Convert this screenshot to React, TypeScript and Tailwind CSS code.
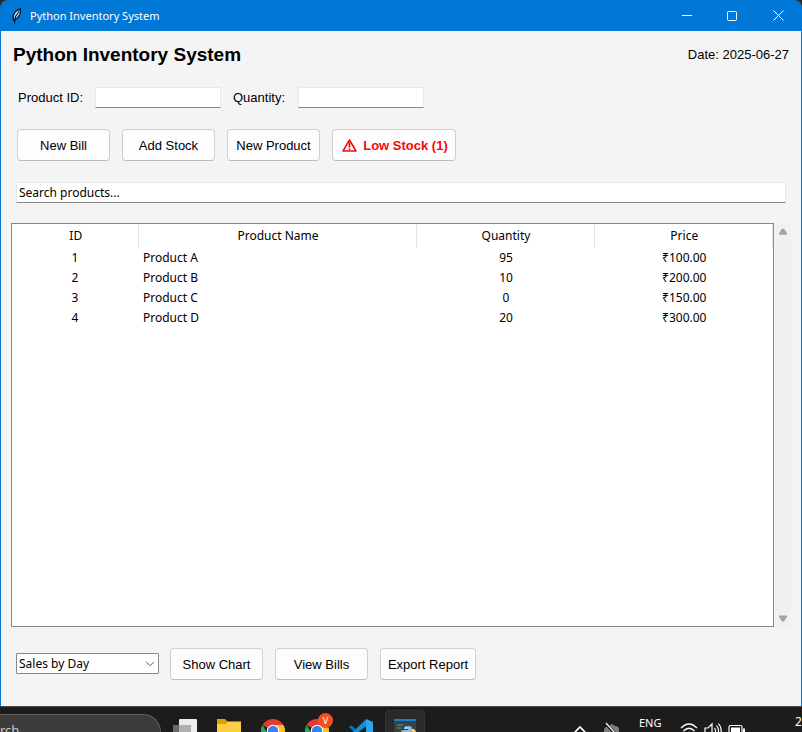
import type { ReactNode } from "react";

const products = [
  { id: 1, name: "Product A", quantity: 95, price: "₹100.00" },
  { id: 2, name: "Product B", quantity: 10, price: "₹200.00" },
  { id: 3, name: "Product C", quantity: 0, price: "₹150.00" },
  { id: 4, name: "Product D", quantity: 20, price: "₹300.00" },
];

const uiFont = "font-['Noto_Sans','Open_Sans',sans-serif]";
const fieldStyle =
  "h-[21px] border border-[#e8e8e8] border-b-[#868686] bg-white outline-none";

function TkButton({ children, className = "w-[93px]" }: { children: ReactNode; className?: string }) {
  return (
    <button
      type="button"
      className={`flex h-8 shrink-0 items-center justify-center rounded-[4px] border border-[#d0d0d0] border-b-[#bcbcbc] bg-[#fdfdfd] pt-px whitespace-nowrap ${className}`}
    >
      {children}
    </button>
  );
}

function TitleBar() {
  return (
    <div className="bg-[#23292e]">
      <header className="flex h-[31px] items-center rounded-t-[8px] bg-[#0078d7] pl-[11px] text-white">
        <svg width="11" height="16" viewBox="0 0 11 16" aria-hidden="true">
          <path d="M9.500.8C6 1.600 3 4.500 2.200 8L2.500 12 6 10.500C8.500 8.500 9.800 4.500 9.500.8Z" fill="#9cc6ea" stroke="#0b1a2a" strokeWidth="1.300" />
          <path d="M8.300 2.500 4.600 8.500 3.500 15.500" fill="none" stroke="#0b1a2a" strokeWidth="1.200" />
          <path d="M4 7.500 7 3.500" stroke="#e8f4ff" strokeWidth=".8" />
        </svg>
        <span className={`flex-1 pl-2 text-[11px] leading-4 ${uiFont}`}>Python Inventory System</span>
        <button type="button" aria-label="Minimize" className="flex h-full w-[45px] items-center justify-center">
          <svg width="10" height="10" viewBox="0 0 10 10"><path d="M0 4.500h10" stroke="white" /></svg>
        </button>
        <button type="button" aria-label="Maximize" className="flex h-full w-[46px] items-center justify-center">
          <svg width="10" height="10" viewBox="0 0 10 10"><rect x=".5" y=".5" width="9" height="9" rx=".8" fill="none" stroke="white" /></svg>
        </button>
        <button type="button" aria-label="Close" className="flex h-full w-[47px] items-center justify-center">
          <svg width="11" height="11" viewBox="0 0 11 11"><path d="m.5.5 10 10M10.500.5l-10 10" stroke="white" /></svg>
        </button>
      </header>
    </div>
  );
}

function ProductTable() {
  return (
    <div className="min-w-0 flex-1 border border-[#828790] bg-white">
      <table className={`w-full table-fixed border-collapse text-center text-[12px] ${uiFont}`}>
        <colgroup>
          <col className="w-[126px]" />
          <col className="w-[278px]" />
          <col className="w-[178px]" />
          <col />
        </colgroup>
        <thead>
          <tr className="h-6">
            {["ID", "Product Name", "Quantity", "Price"].map((label) => (
              <th key={label} scope="col" className="border-r border-[#e5e5e5] p-0 pl-[2px] leading-4 font-normal">
                {label}
              </th>
            ))}
          </tr>
        </thead>
        <tbody>
          {products.map((product) => (
            <tr key={product.id} className="h-5">
              <td className="p-0 leading-4">{product.id}</td>
              <td className="p-0 pl-[5px] text-left leading-4">{product.name}</td>
              <td className="p-0 pl-[2px] leading-4">{product.quantity}</td>
              <td className="p-0 pl-[2px] leading-4">{product.price}</td>
            </tr>
          ))}
        </tbody>
      </table>
    </div>
  );
}

function ScrollBar() {
  return (
    <div className="ml-px flex w-4 flex-col items-center justify-between bg-[#f0f0f0] py-[5px]">
      <button type="button" aria-label="Scroll up">
        <svg className="block" width="8" height="7" viewBox="0 0 8 7"><path d="M3 .8h2L8 5.300V6.800H0V5.300Z" fill="#a3a3a3" /></svg>
      </button>
      <button type="button" aria-label="Scroll down">
        <svg className="block" width="8" height="7" viewBox="0 0 8 7"><path d="M3 6.500h2L8 2V.5H0V2Z" fill="#a3a3a3" /></svg>
      </button>
    </div>
  );
}

function ChromeIcon() {
  return (
    <svg width="24" height="24" viewBox="0 0 24 24" aria-hidden="true">
      <path d="M12 12 1.600 6A12 12 0 0 1 22.400 6Z" fill="#e33b2e" />
      <path d="M12 12V6h10.400A12 12 0 0 1 12 24Z" fill="#fcc31e" />
      <path d="M12 24A12 12 0 0 1 1.600 6L6.800 15 12 18l2-1Z" fill="#2da94f" />
      <circle cx="12" cy="12" r="6.200" fill="white" />
      <circle cx="12" cy="12" r="5.200" fill="#3b7ff0" />
    </svg>
  );
}

function TaskButton({ label, active = false, children }: { label: string; active?: boolean; children: ReactNode }) {
  return (
    <button
      type="button"
      aria-label={label}
      className={`relative flex h-10 w-10 shrink-0 justify-center rounded-[4px] border pt-2 ${active ? "border-[#353535] bg-[#2a2a2a]" : "border-transparent"}`}
    >
      {children}
    </button>
  );
}

function TaskBar() {
  return (
    <footer className={`flex h-[26px] shrink-0 items-start overflow-hidden border-t border-[#454845] bg-[#1c1c1c] pt-[3px] text-white ${uiFont}`}>
      <button type="button" className="mt-1 mr-1 flex h-9 w-[161px] shrink-0 items-start rounded-r-full border-t border-r border-[#606060] bg-[#3b3b3b] pt-[7px] text-[13px] leading-4 text-[#c8c8c8]">
        rch
      </button>
      <div className="flex shrink-0 gap-1">
        <TaskButton label="Task view">
          <svg width="24" height="24" viewBox="0 0 24 24">
            <rect x="6" width="18" height="18" rx="1" fill="#ececec" />
            <rect y="6" width="18" height="18" rx="1" fill="#777" fillOpacity=".85" />
            <path d="M6 6h12v12H6Z" fill="#b0b0b0" />
          </svg>
        </TaskButton>
        <TaskButton label="File Explorer">
          <svg width="24" height="24" viewBox="0 0 24 24">
            <path d="M0 0h8l2 2-2 3H0Z" fill="#e0a000" />
            <path d="M0 5h8l2-2.500h14V22H0Z" fill="#ffce45" />
          </svg>
        </TaskButton>
        <TaskButton label="Chrome"><ChromeIcon /></TaskButton>
        <TaskButton label="Chrome profile">
          <ChromeIcon />
          <span className="absolute top-[2px] right-[3px] flex h-[15px] w-[15px] items-center justify-center rounded-full bg-[#f4511e] text-[9px] leading-3">V</span>
        </TaskButton>
        <TaskButton label="Visual Studio Code">
          <svg width="24" height="24" viewBox="0 0 24 24">
            <path d="m0 8 2-1.800 18 14-3 3.800Z" fill="#0a75bd" />
            <path d="M0 16.500 17 .3l1.500 6L3 18Z" fill="#168bd2" />
            <path d="m17 0 7 3v18l-7 3Z" fill="#2ca5ee" />
          </svg>
        </TaskButton>
        <TaskButton label="Python Inventory System" active>
          <svg width="24" height="24" viewBox="0 0 24 24">
            <path d="M1 0h22v21H1Z" fill="#3b4245" />
            <path d="M1 0h22v2H1Z" fill="#1580d8" />
            <path d="M4 6h6M4 9h4" stroke="#4a8a50" strokeWidth="1.500" />
            <path d="M11 9q0-2 4-2t4 2v5h-7q-3 0-3 4H8v-5q0-2 3-2h4v-1h-4Z" fill="#8bbbe0" />
            <path d="M19 10h1q3 0 3 5t-4 5h-6v-3q0-2 3-2h3Z" fill="#f8d66a" />
            <circle cx="13" cy="9" r=".8" fill="white" />
          </svg>
        </TaskButton>
      </div>
      <div className="ml-auto flex shrink-0 items-start">
        <button type="button" aria-label="Show hidden icons" className="mt-[15px] mr-[14px]">
          <svg className="block" width="18" height="12" viewBox="0 0 18 12"><path d="m4 7 5-5 5 5" fill="none" stroke="white" strokeWidth="1.700" /></svg>
        </button>
        <svg className="mt-3 mr-[18px]" width="18" height="18" viewBox="0 0 18 18" aria-hidden="true">
          <path d="M1 8q1-4 4-3 3-5 7-1 4 0 4 4v10H1Z" fill="#7d7d7d" />
          <path d="m3 2 15 16" stroke="#1c1c1c" strokeWidth="3" />
          <path d="m3 1 15 17" stroke="white" strokeWidth="1.200" />
        </svg>
        <span className="mt-[5px] mr-[17px] w-6 text-[11px] leading-4">ENG</span>
        <svg className="mt-3" width="18" height="18" viewBox="0 0 18 18" fill="none" stroke="white" strokeWidth="1.300" aria-hidden="true">
          <path d="M1 6q8-8 16 0M3.500 9q5.500-5.500 11 0M6 12q3-3 6 0" />
        </svg>
        <svg className="mt-3 ml-[6px]" width="18" height="18" viewBox="0 0 18 18" fill="none" stroke="white" strokeWidth="1.200" aria-hidden="true">
          <path d="M1 6h3L8 2v14l-4-4H1ZM10.500 6q2 3 0 6M12.500 3.500q4 5 0 10M14.500 1.500q5.500 7 0 14" />
        </svg>
        <svg className="mt-[14px] ml-[6px] mr-[49px]" width="18" height="14" viewBox="0 0 18 14" aria-hidden="true">
          <rect x="1" y="1.500" width="13" height="11" rx="1.500" fill="none" stroke="white" strokeWidth="1.200" />
          <path d="M3 3.500h9v7H3ZM15 4.500h2v5h-2Z" fill="white" />
        </svg>
        <span className="mt-1 w-[7px] text-[12px] leading-4">2</span>
      </div>
    </footer>
  );
}

export default function App() {
  return (
    <div className="flex h-screen flex-col overflow-hidden bg-[#1c1c1c] font-['Liberation_Sans',Arial,sans-serif] text-[13px] leading-4 text-black">
      <TitleBar />
      <main className="flex min-h-0 flex-1 flex-col border-x border-[#0078d7] bg-[#f4f4f4] pb-[26px]">
        <div className="flex h-[46px] items-center justify-between px-3 pt-px">
          <h1 className="text-[19px] leading-6 font-bold">Python Inventory System</h1>
          <span>Date: 2025-06-27</span>
        </div>
        <div className="mt-[10px] flex items-center pl-[17px]">
          <label htmlFor="product-id" className="w-[77px]">Product ID:</label>
          <input id="product-id" className={`w-[126px] px-1 ${fieldStyle}`} />
          <label htmlFor="quantity" className="ml-3 w-[65px]">Quantity:</label>
          <input id="quantity" className={`w-[126px] px-1 ${fieldStyle}`} />
        </div>
        <div className="mt-[21px] flex gap-3 px-4">
          <TkButton>New Bill</TkButton>
          <TkButton>Add Stock</TkButton>
          <TkButton>New Product</TkButton>
          <TkButton className="w-[124px] gap-[6px] pl-[2px] font-bold text-[#f60808]">
            <svg width="15" height="13" viewBox="0 0 15 13" aria-hidden="true">
              <path d="M7.500 1 14 12H1Z" fill="none" stroke="currentColor" strokeWidth="1.500" strokeLinejoin="round" />
              <path d="M7.500 3.500v5M7.500 9.500v1.500" stroke="currentColor" strokeWidth="1.700" />
            </svg>
            Low Stock (1)
          </TkButton>
        </div>
        <div className="mt-[21px] flex px-[15px]">
          <input
            aria-label="Search products"
            defaultValue="Search products..."
            className={`w-full px-[2px] text-[12px] ${uiFont} ${fieldStyle}`}
          />
        </div>
        <div className="mt-5 flex min-h-0 flex-1 pr-[10px] pl-[10px]">
          <ProductTable />
          <ScrollBar />
        </div>
        <div className="mt-[21px] flex items-center gap-3 pl-[15px]">
          <div className="relative -mr-px pb-px">
            <select
              aria-label="Report type"
              className={`block h-[21px] w-[143px] appearance-none rounded-[1px] border border-[#868686] bg-white pl-[2px] text-[12px] leading-4 outline-none ${uiFont}`}
            >
              <option>Sales by Day</option>
            </select>
            <svg className="pointer-events-none absolute top-2 right-1" width="10" height="6" viewBox="0 0 10 6" aria-hidden="true">
              <path d="m1 .8 4 4 4-4" fill="none" stroke="#606060" />
            </svg>
          </div>
          <TkButton>Show Chart</TkButton>
          <TkButton>View Bills</TkButton>
          <TkButton className="w-24">Export Report</TkButton>
        </div>
      </main>
      <TaskBar />
    </div>
  );
}
